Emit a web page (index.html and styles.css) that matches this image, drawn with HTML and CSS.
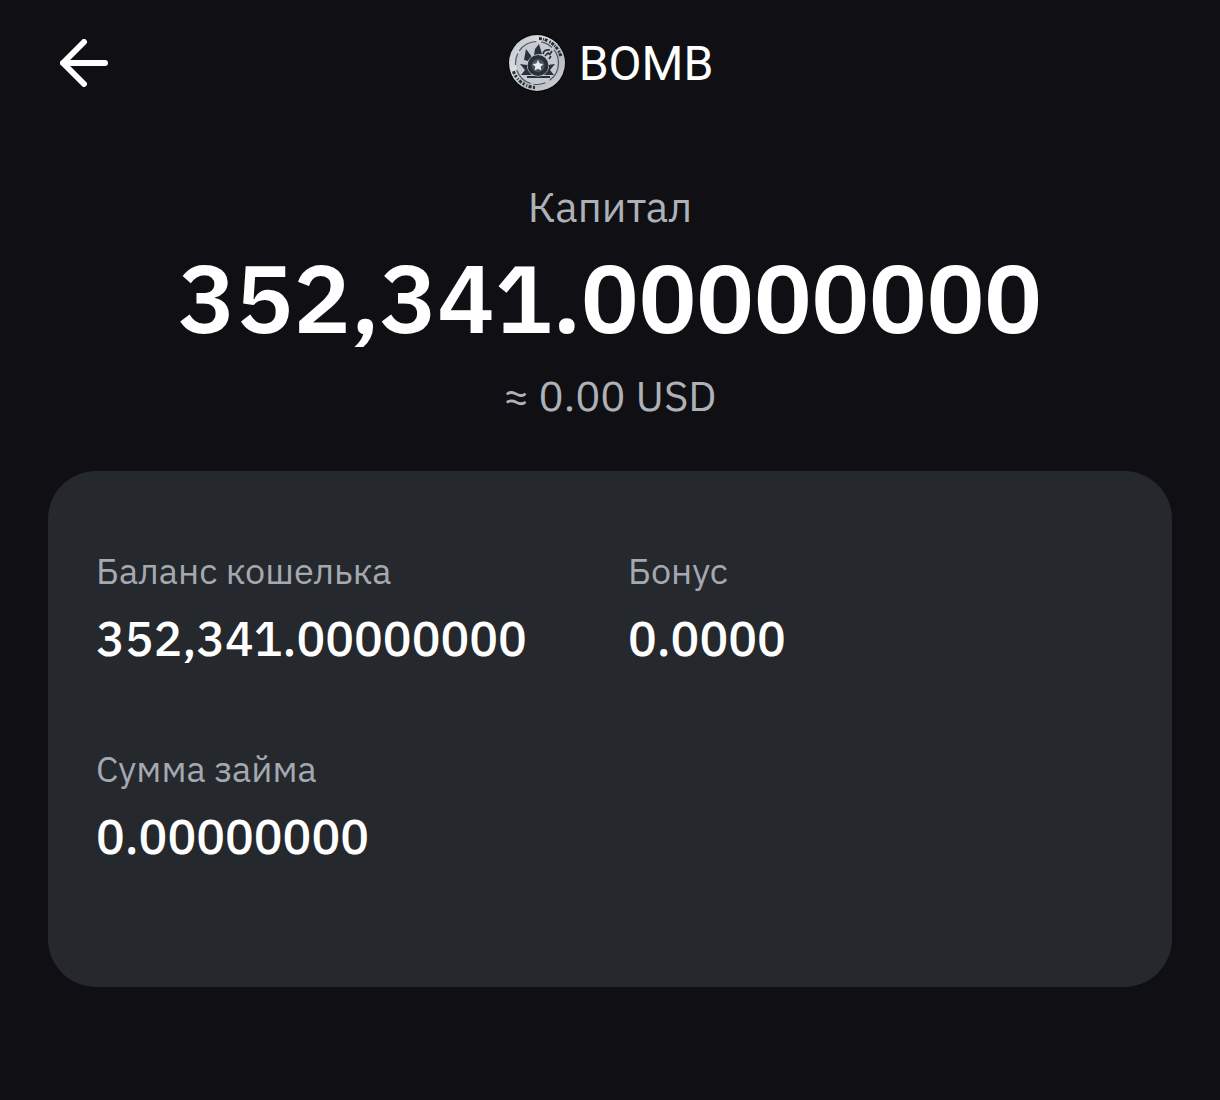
FILE: index.html
```html
<!DOCTYPE html>
<html lang="ru">
<head>
<meta charset="utf-8">
<meta name="viewport" content="width=device-width, initial-scale=1">
<title>BOMB</title>
<link rel="stylesheet" href="styles.css">
</head>
<body>
<header class="topbar">
  <button class="back" type="button" aria-label="Назад">
    <svg width="48" height="48" viewBox="0 0 48 48" fill="none" stroke="currentColor" stroke-width="6" stroke-linecap="round" stroke-linejoin="round"><path d="M24 3 3 24l21 21M3 24h42"/></svg>
  </button>
  <h1 class="coin">
    <svg class="coin-logo" width="60" height="60" viewBox="0 0 60 60" aria-hidden="true">
      <defs><linearGradient id="metal" x1="0" y1="0" x2="1" y2="1"><stop offset="0" stop-color="#b9bdc2"/><stop offset=".35" stop-color="#dcdfe2"/><stop offset=".6" stop-color="#b4b9bf"/><stop offset="1" stop-color="#d0d3d7"/></linearGradient></defs>
      <circle cx="30" cy="29" r="29" fill="#050507"/>
      <circle cx="30" cy="29" r="28" fill="url(#metal)"/>
      <circle cx="30" cy="29" r="21" fill="#c6cad0"/>
      <circle cx="30" cy="29" r="21.500" fill="none" stroke="#4b555f" stroke-width="1.200" stroke-dasharray="20 5 12 3"/>
      <g fill="none" stroke="#252d35" stroke-width="3">
        <path d="M32 4.500A24.500 24.500 0 0 1 54 23" stroke-dasharray="3 1 1 .8 3 2 1.500 1"/>
        <path d="M28 53.500A24.500 24.500 0 0 1 6 36" stroke-dasharray="2 1.500 3 1.500 1 2"/>
      </g>
      <g fill="#28313a">
        <path d="m19 15 6 8-4 4-4-1zM32 10l3 10-8 1 1-6zM13 30l7 1 2 6 3 4H14l4-5zM48 30l-7 1-2 6-3 4h11l-4-5z"/>
        <path d="M20 42h23v2H20z"/>
      </g>
      <path d="M36 20q1-5 7-4M38 22l3-3 2 2M42 25l2-3M45 17l-2 3" fill="none" stroke="#28313a" stroke-width="1.700"/>
      <circle cx="31" cy="31.500" r="11" fill="#c6cad0"/>
      <circle cx="31" cy="31.500" r="8.500" fill="#4b555f" stroke="#28313a" stroke-width="4"/>
      <path d="m31 26 1.700 3.500 3.800.5-2.800 2.700.7 3.800-3.400-1.800-3.400 1.800.7-3.800-2.800-2.700 3.800-.5z" fill="#e8ebed"/>
    </svg>
    <span>BOMB</span>
  </h1>
</header>
<main>
  <section class="equity">
    <h2 class="equity-label">Капитал</h2>
    <p class="equity-total">352,341.00000000</p>
    <p class="equity-usd">≈ 0.00 USD</p>
  </section>
  <dl class="card">
    <div class="item"><dt>Баланс кошелька</dt><dd>352,341.00000000</dd></div>
    <div class="item"><dt>Бонус</dt><dd>0.0000</dd></div>
    <div class="item"><dt>Сумма займа</dt><dd>0.00000000</dd></div>
  </dl>
</main>
</body>
</html>
```
FILE: styles.css
```css
* { box-sizing: border-box; }
body {
  margin: 0;
  padding: 0 48px;
  min-height: 100vh;
  background: #101014;
  color: #fff;
  font-family: "IBM Plex Sans", "Noto Sans", sans-serif;
}
h1, h2, p, dl, dt, dd { margin: 0; font-weight: 400; }
.topbar {
  display: grid;
  grid-template-columns: 1fr auto 1fr;
  align-items: center;
  height: 126px;
}
.back {
  justify-self: start;
  display: flex;
  padding: 12px;
  border: 0;
  background: none;
  color: #fff;
}
.coin {
  display: flex;
  align-items: center;
  gap: 12px;
  padding-top: 2px;
  font: 400 48px/56px Roboto, sans-serif;
}
.equity {
  padding-top: 53px;
  text-align: center;
}
.equity-label, .equity-usd {
  color: #adb1b8;
  font-size: 42px;
  line-height: 56px;
}
.equity-total {
  font-size: 96px;
  font-weight: 600;
  line-height: 124px;
}
.equity-usd { padding-top: 9px; }
.card {
  display: grid;
  grid-template-columns: 1fr 1fr;
  column-gap: 36px;
  row-gap: 75px;
  margin-top: 47px;
  padding: 76px 48px 119px;
  border-radius: 48px;
  background: #25282c;
}
dt {
  color: #a4a8b0;
  font-size: 36px;
  line-height: 48px;
}
dd {
  padding-top: 11px;
  font-size: 48px;
  font-weight: 500;
  line-height: 64px;
}
```
